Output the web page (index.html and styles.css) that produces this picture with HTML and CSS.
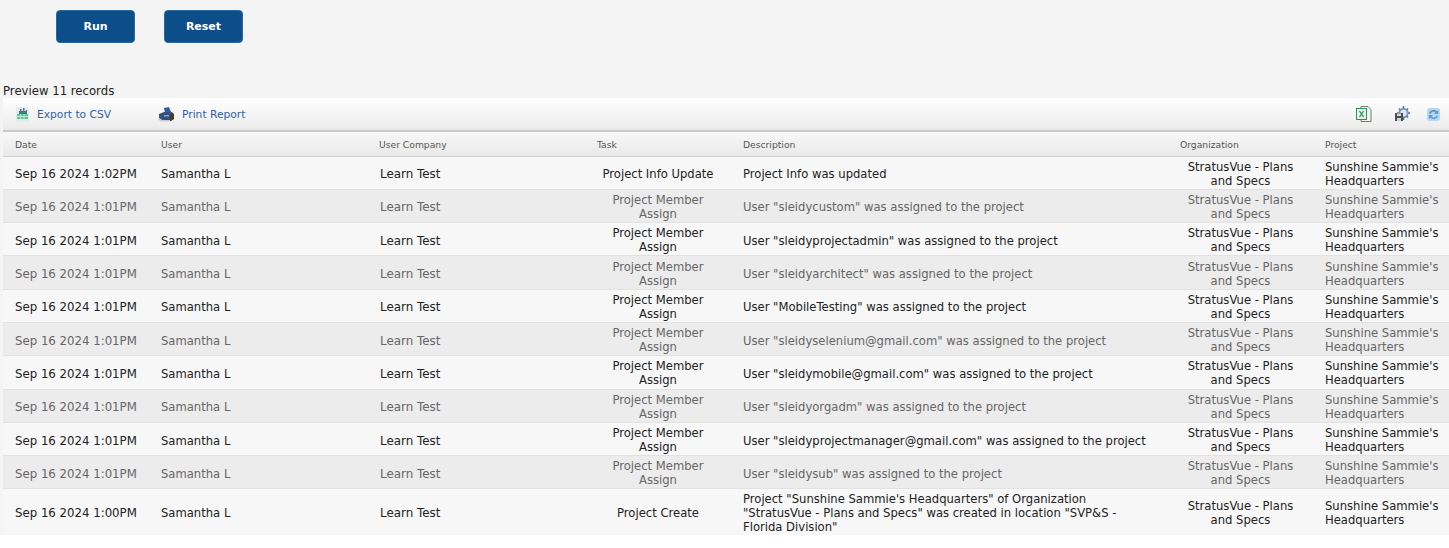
FILE: index.html
```html
<!DOCTYPE html>
<html lang="en">
<head>
<meta charset="utf-8">
<title>Report preview</title>
<link rel="stylesheet" href="styles.css">
</head>
<body>
<main class="page">
  <div class="actions">
    <button class="btn" type="button">Run</button>
    <button class="btn" type="button">Reset</button>
  </div>
  <div class="count">Preview 11 records</div>
  <section class="report">
    <div class="toolbar">
      <a class="tool tool-csv">
        <svg class="ico" width="15" height="15" viewBox="0 0 15 15"><rect x="1" y="0" width="13" height="15" rx="1" fill="#e6e8f2"/><path d="M5 2h1.500v2H8V1h1.500v3H11V3h1v4H4V4h1z" fill="#3d7d92"/><rect x="2" y="7" width="11" height="5" fill="#5cc78f"/><path d="M2 9.500h11M5.500 7v5M9 7v5" stroke="#dff5e8" stroke-width=".7"/></svg>
        <span>Export to CSV</span>
      </a>
      <a class="tool tool-print">
        <svg class="ico" width="17" height="15" viewBox="0 0 17 15"><path d="M6 1l5-1 2 5-6 1z" fill="#2d5f9e"/><path d="M1 7l5-2 8 0 2 2v4l-3 2H4L1 11z" fill="#33507e"/><path d="M1 11l3 2h9v1.500H3L0 12.500z" fill="#c9ccd2"/><path d="M12 7h4v5l-3 2h-1z" fill="#4a3a28"/><rect x="6" y="8" width="5" height="1.500" fill="#7fa6d6"/></svg>
        <span>Print Report</span>
      </a>
      <div class="tool-right">
        <svg class="ic-xls" width="16" height="16" viewBox="0 0 16 16"><path d="M5 .5h7l3 3v12H5z" fill="#f6f7f5" stroke="#6e7a72"/><rect x=".5" y="2.500" width="10" height="11" fill="#e6f3ea" stroke="#2a9458"/><path d="M3.500 5l4 6M7.500 5l-4 6" stroke="#2a9458" stroke-width="1.300"/></svg>
        <svg class="ic-cfg" width="16" height="16" viewBox="0 0 16 16"><circle cx="9.500" cy="7" r="4.200" fill="#dfe7f0" stroke="#7d9cc0" stroke-width="2"/><path d="M9.500 0v2.500M9.500 11.500V14M3 7h2M14 7h2M5 2.500l1.500 1.500M14 2.500L12.500 4M14 11.500L12.500 10" stroke="#54779f" stroke-width="1.600"/><rect x="1" y="7" width="8" height="8" fill="#4a4e56"/><rect x="3" y="7.500" width="4" height="2.500" fill="#e8d9a8"/><rect x="3" y="12" width="4" height="3" fill="#cfd3d8"/></svg>
        <svg class="ic-ref" width="15" height="15" viewBox="0 0 16 16"><rect x="1" y="1" width="14" height="14" rx="3" fill="#bcd8ee"/><path d="M3 7a5 5 0 0 1 8.500-2.500L13 3v4.500H8.500l1.500-1.500A3 3 0 0 0 5 7.500z" fill="#5a9ed6"/><path d="M13 9a5 5 0 0 1-8.500 2.500L3 13V8.500h4.500L6 10a3 3 0 0 0 5-.5z" fill="#5a9ed6"/></svg>
      </div>
    </div>
    <table class="grid">
      <colgroup>
        <col class="c-date"><col class="c-user"><col class="c-comp"><col class="c-task"><col class="c-desc"><col class="c-org"><col class="c-proj">
      </colgroup>
      <thead>
        <tr><th>Date</th><th>User</th><th>User Company</th><th>Task</th><th>Description</th><th>Organization</th><th>Project</th></tr>
      </thead>
      <tbody>
        <tr><td class="date">Sep 16 2024 1:02PM</td><td>Samantha L</td><td class="comp">Learn Test</td><td class="mid">Project Info Update</td><td>Project Info was updated</td><td class="mid">StratusVue - Plans and Specs</td><td class="proj">Sunshine Sammie's Headquarters</td></tr>
        <tr class="alt"><td class="date">Sep 16 2024 1:01PM</td><td>Samantha L</td><td class="comp">Learn Test</td><td class="mid">Project Member Assign</td><td>User "sleidycustom" was assigned to the project</td><td class="mid">StratusVue - Plans and Specs</td><td class="proj">Sunshine Sammie's Headquarters</td></tr>
        <tr><td class="date">Sep 16 2024 1:01PM</td><td>Samantha L</td><td class="comp">Learn Test</td><td class="mid">Project Member Assign</td><td>User "sleidyprojectadmin" was assigned to the project</td><td class="mid">StratusVue - Plans and Specs</td><td class="proj">Sunshine Sammie's Headquarters</td></tr>
        <tr class="alt"><td class="date">Sep 16 2024 1:01PM</td><td>Samantha L</td><td class="comp">Learn Test</td><td class="mid">Project Member Assign</td><td>User "sleidyarchitect" was assigned to the project</td><td class="mid">StratusVue - Plans and Specs</td><td class="proj">Sunshine Sammie's Headquarters</td></tr>
        <tr><td class="date">Sep 16 2024 1:01PM</td><td>Samantha L</td><td class="comp">Learn Test</td><td class="mid">Project Member Assign</td><td>User "MobileTesting" was assigned to the project</td><td class="mid">StratusVue - Plans and Specs</td><td class="proj">Sunshine Sammie's Headquarters</td></tr>
        <tr class="alt"><td class="date">Sep 16 2024 1:01PM</td><td>Samantha L</td><td class="comp">Learn Test</td><td class="mid">Project Member Assign</td><td>User "sleidyselenium@gmail.com" was assigned to the project</td><td class="mid">StratusVue - Plans and Specs</td><td class="proj">Sunshine Sammie's Headquarters</td></tr>
        <tr><td class="date">Sep 16 2024 1:01PM</td><td>Samantha L</td><td class="comp">Learn Test</td><td class="mid">Project Member Assign</td><td>User "sleidymobile@gmail.com" was assigned to the project</td><td class="mid">StratusVue - Plans and Specs</td><td class="proj">Sunshine Sammie's Headquarters</td></tr>
        <tr class="alt"><td class="date">Sep 16 2024 1:01PM</td><td>Samantha L</td><td class="comp">Learn Test</td><td class="mid">Project Member Assign</td><td>User "sleidyorgadm" was assigned to the project</td><td class="mid">StratusVue - Plans and Specs</td><td class="proj">Sunshine Sammie's Headquarters</td></tr>
        <tr><td class="date">Sep 16 2024 1:01PM</td><td>Samantha L</td><td class="comp">Learn Test</td><td class="mid">Project Member Assign</td><td>User "sleidyprojectmanager@gmail.com" was assigned to the project</td><td class="mid">StratusVue - Plans and Specs</td><td class="proj">Sunshine Sammie's Headquarters</td></tr>
        <tr class="alt"><td class="date">Sep 16 2024 1:01PM</td><td>Samantha L</td><td class="comp">Learn Test</td><td class="mid">Project Member Assign</td><td>User "sleidysub" was assigned to the project</td><td class="mid">StratusVue - Plans and Specs</td><td class="proj">Sunshine Sammie's Headquarters</td></tr>
        <tr class="last"><td class="date">Sep 16 2024 1:00PM</td><td>Samantha L</td><td class="comp">Learn Test</td><td class="mid">Project Create</td><td>Project "Sunshine Sammie's Headquarters" of Organization "StratusVue - Plans and Specs" was created in location "SVP&amp;S - Florida Division"</td><td class="mid">StratusVue - Plans and Specs</td><td class="proj">Sunshine Sammie's Headquarters</td></tr>
      </tbody>
    </table>
  </section>
</main>
</body>
</html>
```

FILE: styles.css
```css
* { box-sizing: border-box; }
html, body { margin: 0; background: #fff; }
body { font-family: "DejaVu Sans", Verdana, sans-serif; font-size: 11.6px; color: #222; overflow: hidden; }
.page { background: #f4f4f4; height: 535px; padding-left: 3px; overflow: hidden; }
.actions { display: flex; gap: 29px; padding: 10px 0 0 53px; height: 84px; }
.btn { width: 79px; height: 33px; background: #0b4e8a; color: #fff; border: 1px solid #2a6aa0; border-radius: 4px; font: bold 11px "DejaVu Sans", Verdana, sans-serif; padding: 0; }
.count { font-size: 11.7px; height: 14px; line-height: 14px; color: #222; }
.toolbar { display: flex; align-items: center; height: 34px; background: linear-gradient(#ffffff, #ebebeb); border-bottom: 2px solid #c9c9c9; padding: 0 8px 0 12px; color: #3262a4; font-size: 10.7px; }
.tool { display: flex; align-items: center; }
.tool-csv { gap: 7px; width: 143px; }
.tool-print { gap: 7px; }
.tool-right { margin-left: auto; display: flex; align-items: center; }
.ic-cfg { margin-left: 22px; }
.ic-ref { margin-left: 16px; }
.grid { width: 1446px; table-layout: fixed; border-collapse: collapse; }
.c-date { width: 146px; } .c-user { width: 218px; } .c-comp { width: 218px; } .c-task { width: 146px; }
.c-desc { width: 437px; } .c-org { width: 145px; } .c-proj { width: 136px; }
th { height: 24px; padding: 2px 12px 0; text-align: left; font-weight: normal; font-size: 9.2px; color: #555; background: linear-gradient(#f8f8f8, #e9e9e9); border-bottom: 1px solid #d0d0d0; }
td { height: 33.3px; padding: 3px 12px 0; line-height: 14px; vertical-align: middle; color: #222; background: #f7f7f7; border-bottom: 1px solid #e2e2e2; }
td.date { font-size: 11.75px; }
td.comp { font-size: 11.9px; padding-left: 13px; }
td.mid { text-align: center; padding-top: 2px; }
td.proj { padding-top: 2px; padding-right: 4px; }
.alt td { background: #ececec; color: #666; }
.last td { height: 46px; padding-top: 2px; border-bottom: 0; }
```
